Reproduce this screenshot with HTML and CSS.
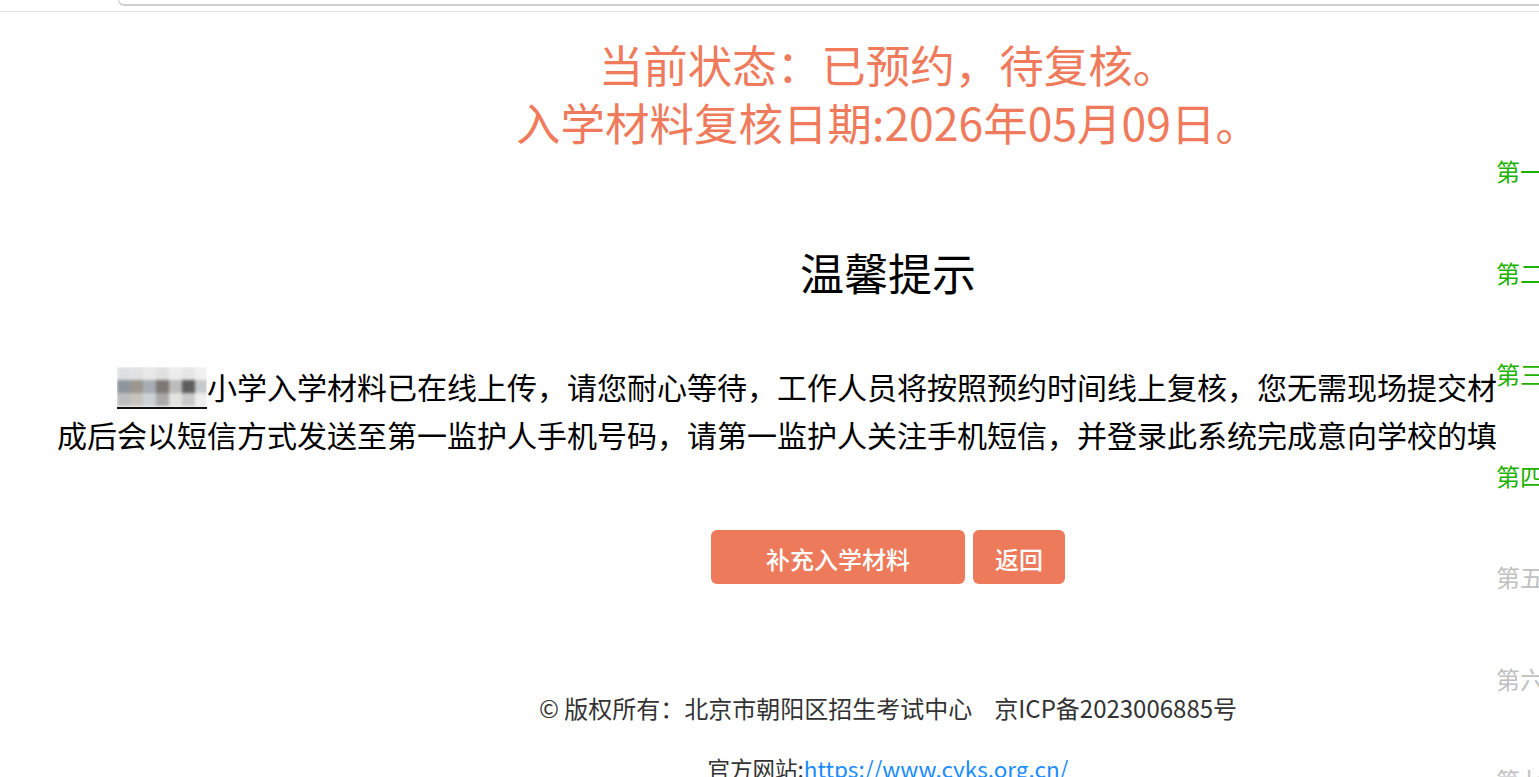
FILE: index.html
```html
<!DOCTYPE html>
<html lang="zh-CN">
<head>
<meta charset="utf-8">
<title>入学材料复核</title>
<link rel="stylesheet" href="styles.css">
</head>
<body>
<div class="topbar"><div class="tab"></div></div>
<div class="page">
  <main class="main">
    <h1 class="status">当前状态：已预约，待复核。<br>入学材料复核日期:2026年05月09日。</h1>
    <h2 class="tip-title">温馨提示</h2>
    <p class="tip"><span class="mosaic"><svg width="90" height="42" viewBox="0 0 90 42">
      <g class="blur">
        <rect x="0" y="0" width="90" height="40" fill="#e6e8ea"/>
        <rect x="0" y="0" width="13" height="13" fill="#dde0e3"/>
        <rect x="13" y="0" width="13" height="13" fill="#e2e2e2"/>
        <rect x="26" y="0" width="13" height="13" fill="#e8e8e8"/>
        <rect x="39" y="0" width="13" height="13" fill="#e0e0e0"/>
        <rect x="52" y="0" width="13" height="13" fill="#ececec"/>
        <rect x="65" y="0" width="13" height="13" fill="#e6e6e6"/>
        <rect x="78" y="0" width="12" height="13" fill="#f0f0f0"/>
        <rect x="0" y="13" width="13" height="13" fill="#8e959b"/>
        <rect x="13" y="13" width="13" height="13" fill="#9b9690"/>
        <rect x="26" y="13" width="13" height="13" fill="#a7adb2"/>
        <rect x="39" y="13" width="13" height="13" fill="#7d7874"/>
        <rect x="52" y="13" width="13" height="13" fill="#bcbcbc"/>
        <rect x="65" y="13" width="13" height="13" fill="#5e5e5e"/>
        <rect x="78" y="13" width="12" height="13" fill="#c6c9cc"/>
        <rect x="0" y="26" width="13" height="13" fill="#bdbdbd"/>
        <rect x="13" y="26" width="13" height="13" fill="#c8c3be"/>
        <rect x="26" y="26" width="13" height="13" fill="#ccd1d6"/>
        <rect x="39" y="26" width="13" height="13" fill="#a9a9a9"/>
        <rect x="52" y="26" width="13" height="13" fill="#e3e3df"/>
        <rect x="65" y="26" width="13" height="13" fill="#c9c9c9"/>
        <rect x="78" y="26" width="12" height="13" fill="#eeeeee"/>
      </g>
      <rect x="0" y="40" width="90" height="2" fill="#111"/>
    </svg></span>小学入学材料已在线上传，请您耐心等待，工作人员将按照预约时间线上复核，您无需现场提交材料，复核完成后会以短信方式发送至第一监护人手机号码，请第一监护人关注手机短信，并登录此系统完成意向学校的填报。</p>
    <div class="actions">
      <button class="btn btn-main" type="button">补充入学材料</button>
      <button class="btn btn-back" type="button">返回</button>
    </div>
    <footer class="footer">
      <p class="copy">© 版权所有：北京市朝阳区招生考试中心<span class="icp">京ICP备2023006885号</span></p>
      <p class="site">官方网站:<a href="#" class="link">https://www.cyks.org.cn/</a></p>
    </footer>
  </main>
  <aside class="steps">
    <div class="step done">第一步</div>
    <div class="step done">第二步</div>
    <div class="step done">第三步</div>
    <div class="step done">第四步</div>
    <div class="step">第五步</div>
    <div class="step">第六步</div>
    <div class="step">第七步</div>
  </aside>
</div>
</body>
</html>
```
FILE: styles.css
```css
html, body {
  margin: 0;
  padding: 0;
  background: #fff;
  overflow: hidden;
  height: 777px;
}
body {
  font-family: "Noto Sans CJK SC", "Noto Sans", sans-serif;
  color: #000;
}
.topbar {
  height: 11px;
  border-bottom: 1px solid #e4e4e4;
}
.tab {
  margin-left: 118px;
  height: 4px;
  border-left: 1px solid #c8c8c8;
  border-bottom: 2px solid #cfcfcf;
  border-bottom-left-radius: 9px;
}
.page {
  display: flex;
  align-items: flex-start;
}
.main {
  flex: 0 0 1776px;
  width: 1776px;
  margin-right: -280px;
}
.status {
  margin: 23px 0 0;
  font-size: 44.5px;
  line-height: 58px;
  font-weight: 400;
  color: #ef7b5c;
  text-align: center;
}
.tip-title {
  margin: 91px 0 0;
  font-size: 44px;
  line-height: 60px;
  font-weight: 400;
  text-align: center;
}
.tip {
  margin: 60px 0 0 57px;
  width: 1600px;
  font-size: 30px;
  line-height: 48px;
  text-indent: 60px;
}
.mosaic {
  display: inline-block;
  width: 90px;
  height: 42px;
  vertical-align: -10px;
  text-indent: 0;
}
.mosaic svg {
  display: block;
}
.blur {
  filter: blur(1.5px);
}
.actions {
  margin-top: 72px;
  display: flex;
  justify-content: center;
  gap: 8px;
}
.btn {
  height: 54px;
  border: none;
  border-radius: 6px;
  background: #ee7a5c;
  color: #fff;
  font-family: inherit;
  font-size: 24px;
  font-weight: 500;
  padding-top: 3px;
  cursor: pointer;
}
.btn-main {
  width: 254px;
}
.btn-back {
  width: 92px;
}
.footer {
  margin-top: 109px;
  text-align: center;
  color: #333;
  font-size: 24px;
  line-height: 30px;
}
.footer p {
  margin: 0;
}
.footer .site {
  margin-top: 30px;
  font-size: 22.5px;
}
.icp {
  margin-left: 22px;
}
.link {
  color: #1a8cff;
  text-decoration: underline;
}
.steps {
  position: relative;
  flex: 0 0 300px;
  background: #fff;
  padding-top: 144px;
  display: flex;
  flex-direction: column;
  gap: 71.5px;
  min-height: 780px;
}
.step {
  font-size: 24px;
  line-height: 30px;
  color: #c0c0c0;
  white-space: nowrap;
}
.step.done {
  color: #1db100;
}
```
